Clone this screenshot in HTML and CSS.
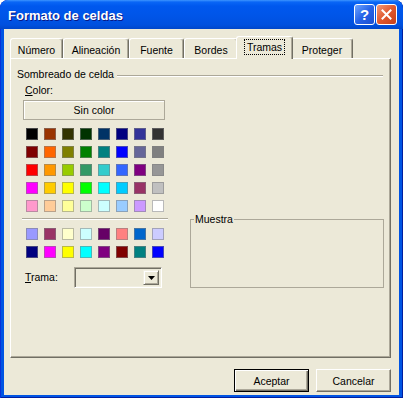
FILE: index.html
```html
<!DOCTYPE html>
<html>
<head>
	<meta charset="utf-8">
	<title>Formato de celdas</title>
	<link rel="stylesheet" href="styles.css">
</head>
<body>
<div class="ventana">
	<div class="titulo">
		<span class="titulo-texto">Formato de celdas</span>
		<span class="btn-titulo ayuda">?</span>
		<span class="btn-titulo cerrar">
			<svg width="11" height="11" viewBox="0 0 11 11"><path d="M1.5 1.5 L9.5 9.5 M9.5 1.5 L1.5 9.5" stroke="#fff" stroke-width="2" stroke-linecap="square"/></svg>
		</span>
	</div>
	<div class="cliente">
		<div class="pestanas">
			<div class="pestana p-numero">Número</div>
			<div class="pestana p-alineacion">Alineación</div>
			<div class="pestana p-fuente">Fuente</div>
			<div class="pestana p-bordes">Bordes</div>
			<div class="pestana p-tramas activa"><span class="foco">Tramas</span></div>
			<div class="pestana p-proteger">Proteger</div>
		</div>
		<div class="panel">
			<div class="grupo-cab"><span>Sombreado de celda</span><i class="linea"></i></div>
			<div class="cuerpo">
				<div class="izq">
					<div class="etiqueta"><u>C</u>olor:</div>
					<div class="sin-color">Sin color</div>
					<div class="paleta" id="paleta1"></div>
					<div class="sep"></div>
					<div class="paleta" id="paleta2"></div>
					<div class="trama">
						<span class="etiqueta"><u>T</u>rama:</span>
						<div class="combo">
							<div class="combo-campo"></div>
							<div class="combo-btn">
								<svg width="7" height="4" viewBox="0 0 7 4"><polygon points="0,0 7,0 3.5,4" fill="#000"/></svg>
							</div>
						</div>
					</div>
				</div>
				<fieldset class="muestra"><legend>Muestra</legend></fieldset>
			</div>
		</div>
		<div class="botones">
			<button class="btn defecto">Aceptar</button>
			<button class="btn">Cancelar</button>
		</div>
	</div>
</div>
<script>
	var colores1 = [
		"#000000","#993300","#333300","#003300","#003366","#000080","#333399","#333333",
		"#800000","#FF6600","#808000","#008000","#008080","#0000FF","#666699","#808080",
		"#FF0000","#FF9900","#99CC00","#339966","#33CCCC","#3366FF","#800080","#969696",
		"#FF00FF","#FFCC00","#FFFF00","#00FF00","#00FFFF","#00CCFF","#993366","#C0C0C0",
		"#FF99CC","#FFCC99","#FFFF99","#CCFFCC","#CCFFFF","#99CCFF","#CC99FF","#FFFFFF"
	];
	var colores2 = [
		"#9999FF","#993366","#FFFFCC","#CCFFFF","#660066","#FF8080","#0066CC","#CCCCFF",
		"#000080","#FF00FF","#FFFF00","#00FFFF","#800080","#800000","#008080","#0000FF"
	];
	function llenarPaleta(id, lista){
		var html = "";
		for(var i=0;i<lista.length;i++){
			html += "<span class='muestra-color' style='background:" + lista[i] + "'></span>";
		}
		document.getElementById(id).innerHTML = html;
	}
	llenarPaleta("paleta1", colores1);
	llenarPaleta("paleta2", colores2);
</script>
</body>
</html>
```

FILE: styles.css
```css
body{
	margin:0;
	background:#fff;
	font:10.5px "Liberation Sans", Arial, sans-serif;
	color:#000;
}
.ventana{
	width:403px;
	height:398px;
	display:flex;
	flex-direction:column;
	background:#0054E3;
	border-radius:8px 8px 0 0;
	box-shadow:inset 1px 0 #0831D9, inset -1px 0 #001EA0, inset 0 -1px #001EA0;
	overflow:hidden;
}
.titulo{
	height:29px;
	flex:none;
	display:flex;
	align-items:center;
	padding:0 6px 0 8px;
	border-radius:8px 8px 0 0;
	background:linear-gradient(#3D95FF 0, #0A66F6 2px, #0058EE 6px, #0055E8 16px, #0050DE 25px, #0046C9 29px);
}
.titulo-texto{
	color:#fff;
	font:bold 13px "Liberation Sans", Arial, sans-serif;
	text-shadow:1px 1px #0A1883;
	padding-top:1px;
}
.btn-titulo{
	width:21px;
	height:21px;
	box-sizing:border-box;
	border:1px solid #fff;
	border-radius:3px;
	display:flex;
	align-items:center;
	justify-content:center;
	color:#fff;
}
.ayuda{
	margin-left:auto;
	margin-right:1px;
	background:linear-gradient(135deg, #6FA5FF, #2663E8 50%, #1A4FD0);
	font:bold 15px "Liberation Sans", Arial, sans-serif;
}
.cerrar{
	background:linear-gradient(135deg, #F19A77, #E0572E 50%, #C6401A);
}
.cliente{
	flex:1;
	margin:0 4px 3px;
	padding:7px 8px 0 6px;
	background:#ECE9D8;
	display:flex;
	flex-direction:column;
}
.pestanas{
	height:22px;
	display:flex;
	align-items:flex-end;
}
.pestana{
	height:20px;
	box-sizing:border-box;
	padding-top:2px;
	border:1px solid #fff;
	border-right-color:#716F64;
	border-bottom:none;
	border-radius:3px 3px 0 0;
	display:flex;
	align-items:center;
	justify-content:center;
	background:#ECE9D8;
	box-shadow:inset -1px 0 #ACA899;
}
.p-numero{ width:53px; }
.p-alineacion{ width:66px; }
.p-fuente{ width:55px; }
.p-bordes{ width:54px; }
.p-tramas{ width:53px; }
.p-proteger{ width:62px; }
.pestana.activa{
	position:relative;
	z-index:1;
	width:57px;
	height:23px;
	margin:0 -2px -1px;
	padding:0 0 2px;
}
.foco{
	outline:1px dotted #000;
	padding:1px 2px 0;
	line-height:13px;
}
.panel{
	height:300px;
	box-sizing:border-box;
	border:1px solid #fff;
	border-right-color:#716F64;
	border-bottom-color:#716F64;
	box-shadow:inset -1px -1px #ACA899;
}
.grupo-cab{
	display:flex;
	align-items:center;
	margin:9px 7px 0 6px;
	line-height:13px;
}
.linea{
	flex:1;
	margin:2px 0 0 3px;
	border-top:1px solid #ACA899;
	border-bottom:1px solid #fff;
}
.cuerpo{
	display:flex;
	margin-left:12px;
}
.izq{
	width:142px;
	display:flex;
	flex-direction:column;
}
.etiqueta{
	line-height:13px;
	margin:3px 0 0 2px;
}
.sin-color{
	height:20px;
	margin-top:3px;
	box-sizing:border-box;
	border:1px solid #ACA899;
	box-shadow:inset 1px 1px #fff;
	display:flex;
	align-items:center;
	justify-content:center;
}
.paleta{
	display:grid;
	grid-template-columns:repeat(8, 12px);
	grid-auto-rows:12px;
	gap:6px;
	padding-left:3px;
	margin-top:8px;
}
.muestra-color{
	box-sizing:border-box;
	border:1px solid rgba(128,128,128,0.55);
}
.sep{
	margin:6px -3px 0 -1px;
	border-top:1px solid #ACA899;
	border-bottom:1px solid #fff;
}
.trama{
	display:flex;
	align-items:center;
	margin-top:9px;
}
.trama .etiqueta{
	width:49px;
	margin:0 0 0 2px;
}
.combo{
	width:88px;
	height:21px;
	box-sizing:border-box;
	display:flex;
	justify-content:flex-end;
	padding:2px;
	border:1px solid;
	border-color:#ACA899 #fff #fff #ACA899;
	box-shadow:inset 1px 1px #716F64, inset -1px -1px #F1EFE2;
}
.combo-campo{
	flex:1;
}
.combo-btn{
	width:16px;
	box-sizing:border-box;
	display:flex;
	align-items:center;
	justify-content:center;
	border:1px solid;
	border-color:#F1EFE2 #716F64 #716F64 #F1EFE2;
	box-shadow:inset 1px 1px #fff, inset -1px -1px #ACA899;
}
.muestra{
	align-self:flex-end;
	width:194px;
	height:75px;
	box-sizing:border-box;
	margin:0 0 0 25px;
	padding:0;
	border:1px solid #ACA899;
}
.muestra legend{
	margin-left:3px;
	padding:0 1px;
	line-height:13px;
}
.botones{
	display:flex;
	justify-content:flex-end;
	gap:7px;
	margin-top:11px;
}
.btn{
	width:75px;
	height:23px;
	padding:0;
	font:10.5px "Liberation Sans", Arial, sans-serif;
	color:#000;
	background:#ECE9D8;
	border:1px solid;
	border-color:#fff #716F64 #716F64 #fff;
	box-shadow:inset -1px -1px #ACA899;
}
.btn.defecto{
	border:1px solid #000;
	box-shadow:inset 1px 1px #fff, inset -1px -1px #716F64, inset -2px -2px #ACA899;
}
```
